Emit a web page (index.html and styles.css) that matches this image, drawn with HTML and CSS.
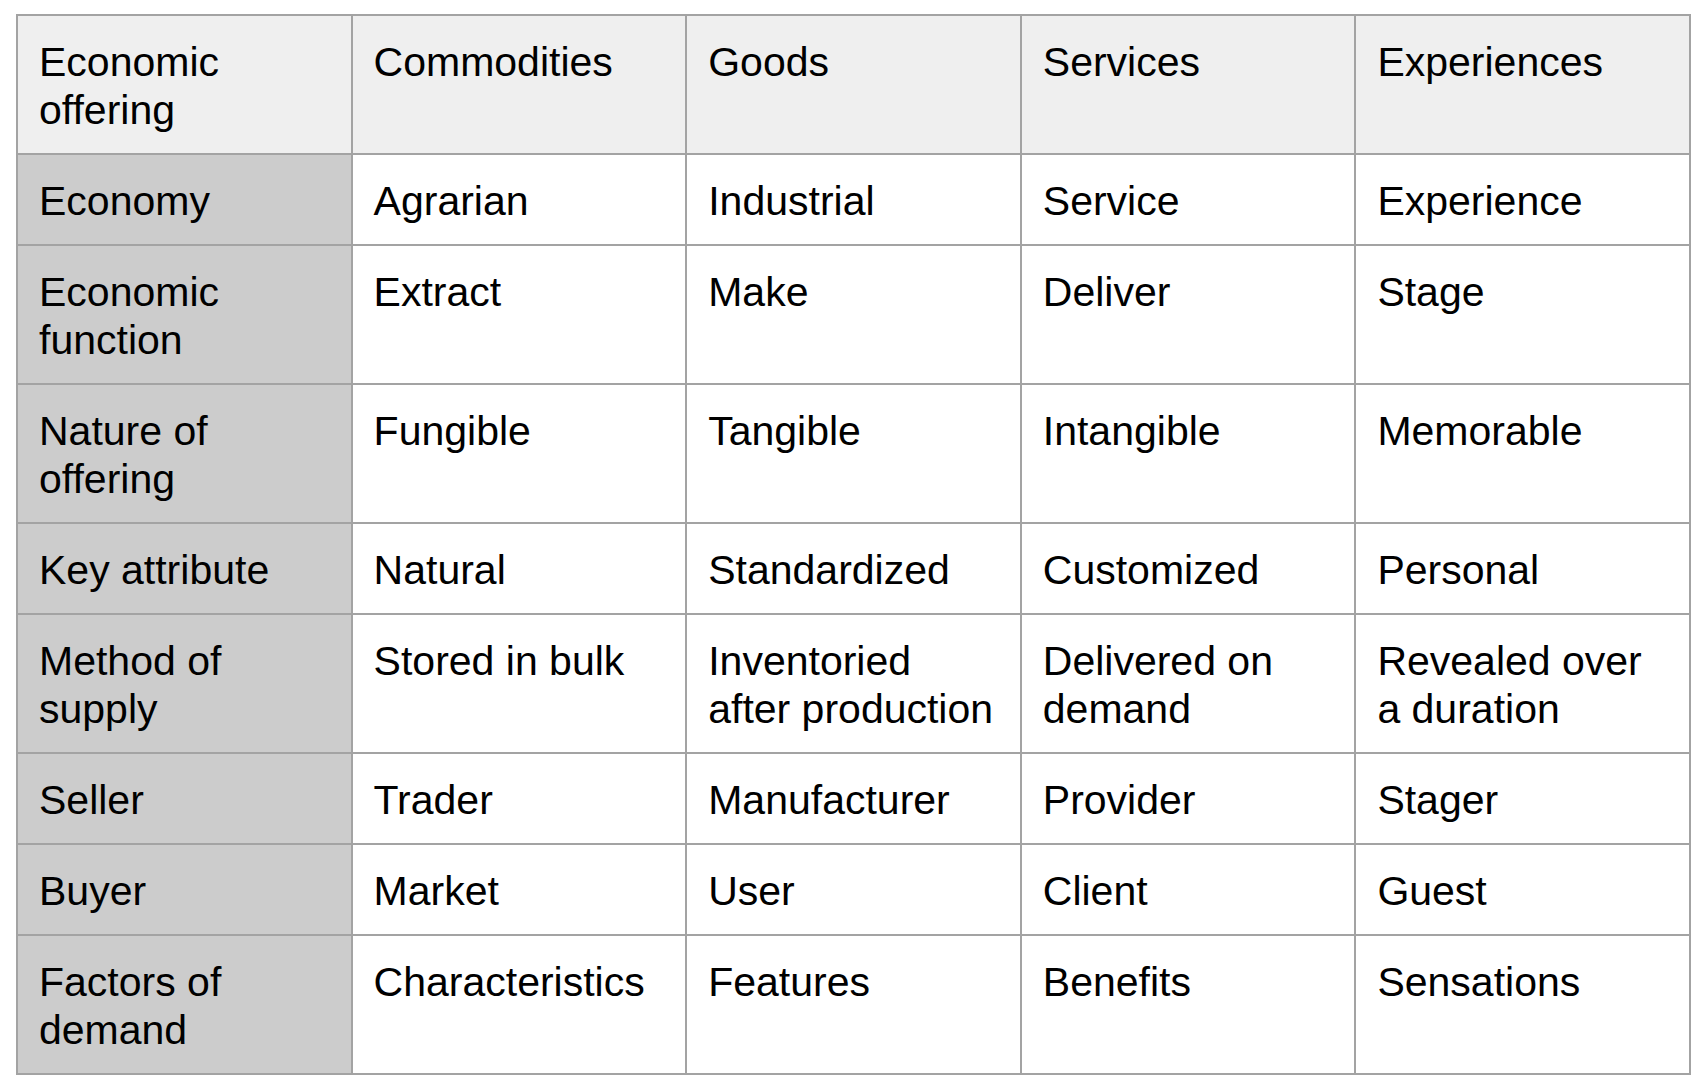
FILE: index.html
```html
<!DOCTYPE html>
<html>
<head>
<meta charset="utf-8">
<link rel="stylesheet" href="styles.css">
</head>
<body>
<table class="grid">
  <thead>
    <tr class="head">
      <th>Economic offering</th>
      <th>Commodities</th>
      <th>Goods</th>
      <th>Services</th>
      <th>Experiences</th>
    </tr>
  </thead>
  <tbody>
    <tr><th>Economy</th><td>Agrarian</td><td>Industrial</td><td>Service</td><td>Experience</td></tr>
    <tr><th>Economic function</th><td>Extract</td><td>Make</td><td>Deliver</td><td>Stage</td></tr>
    <tr><th>Nature of offering</th><td>Fungible</td><td>Tangible</td><td>Intangible</td><td>Memorable</td></tr>
    <tr><th>Key attribute</th><td>Natural</td><td>Standardized</td><td>Customized</td><td>Personal</td></tr>
    <tr><th>Method of supply</th><td>Stored in bulk</td><td>Inventoried after production</td><td>Delivered on demand</td><td>Revealed over a duration</td></tr>
    <tr><th>Seller</th><td>Trader</td><td>Manufacturer</td><td>Provider</td><td>Stager</td></tr>
    <tr><th>Buyer</th><td>Market</td><td>User</td><td>Client</td><td>Guest</td></tr>
    <tr><th>Factors of demand</th><td>Characteristics</td><td>Features</td><td>Benefits</td><td>Sensations</td></tr>
  </tbody>
</table>
</body>
</html>
```
FILE: styles.css
```css
html, body {
  margin: 0;
  padding: 0;
  background: #ffffff;
}
body {
  padding: 14px 0 0 16px;
  font-family: "Liberation Sans", Arial, sans-serif;
  color: #000000;
}
.grid {
  border-collapse: collapse;
  table-layout: fixed;
  width: 1675px;
}
.grid th,
.grid td {
  border: 2px solid #a3a3a3;
  padding: 21.5px 20px 19.5px 21px;
  font-size: 41px;
  line-height: 48px;
  font-weight: normal;
  text-align: left;
  vertical-align: top;
  background: #ffffff;
}
.grid tbody th {
  background: #cccccc;
}
.grid .head th {
  background: #efefef;
}
```
